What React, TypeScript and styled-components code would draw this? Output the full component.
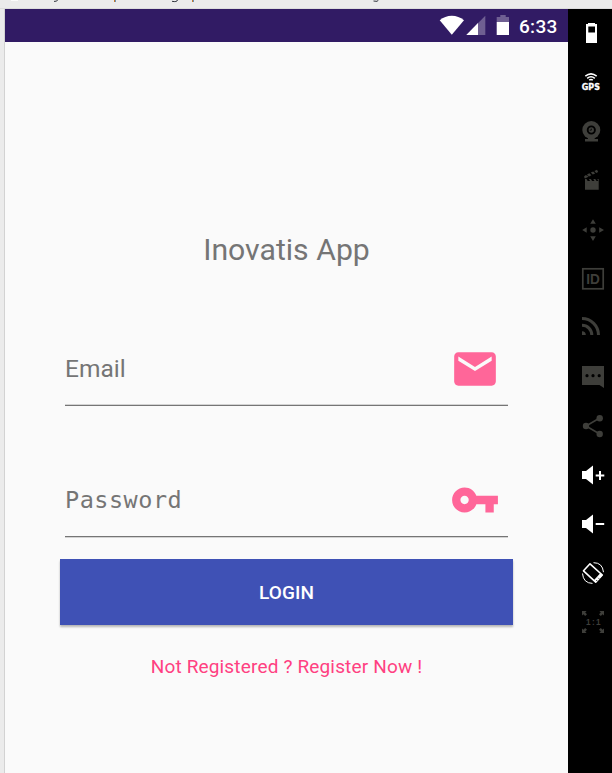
import React from "react";
import styled, { createGlobalStyle } from "styled-components";

const GlobalStyle = createGlobalStyle`
  html, body, #root { margin: 0; padding: 0; height: 100%; }
  body { overflow: hidden; background: #ebebeb; font-family: Roboto, sans-serif; }
  svg { display: block; flex: none; }
`;

const Page = styled.div`
  display: flex;
  flex-direction: column;
  width: 612px;
  height: 773px;
  overflow: hidden;
  background: #ebebeb;
`;

const EditorStrip = styled.header`
  flex: none;
  height: 8px;
  border-bottom: 1px solid #dcdcdc;
`;

const Emulator = styled.div`
  flex: 1;
  display: flex;
  box-sizing: border-box;
  padding-left: 4px;
  min-height: 0;
`;

const Screen = styled.main`
  flex: 1;
  display: flex;
  flex-direction: column;
  border-left: 1px solid #d2d2d2;
  background: #fafafa;
`;

const StatusBar = styled.div`
  flex: none;
  display: flex;
  align-items: center;
  justify-content: flex-end;
  height: 33px;
  padding-right: 10px;
  background: #311b64;
`;

const Clock = styled.span`
  width: 39px;
  margin-left: 9px;
  padding-top: 2px;
  color: #fff;
  font-size: 19px;
  font-weight: 500;
  letter-spacing: 0.3px;
  line-height: 31px;
  white-space: nowrap;
`;

const Form = styled.form`
  display: flex;
  flex-direction: column;
  padding: 0 55px;
`;

const Title = styled.h1`
  margin: 188px 0 0;
  color: #757575;
  font-size: 30.2px;
  font-weight: 400;
  line-height: 40px;
  text-align: center;
`;

const Field = styled.label<{ $top: number; $edge: "above" | "below" }>`
  display: flex;
  justify-content: space-between;
  height: 61px;
  margin: ${(p) => p.$top}px 5px 0;
  padding-right: 7.6px;
  border-bottom: 1px solid #757575;
  box-shadow: ${(p) => (p.$edge === "above" ? "inset 0 -1px 0 #d3d3d3" : "0 1px 0 #d3d3d3")};
`;

const Hint = styled.span<{ $mono?: boolean }>`
  color: #757575;
  font-family: ${(p) => (p.$mono ? '"DejaVu Sans Mono", monospace' : "Roboto, sans-serif")};
  font-size: ${(p) => (p.$mono ? 23.5 : 24.5)}px;
  letter-spacing: ${(p) => (p.$mono ? 0.5 : 0)}px;
  line-height: 50px;
`;

const LoginButton = styled.button`
  height: 66px;
  margin-top: 22px;
  padding: 0;
  border: 0;
  background: #3f51b5;
  box-shadow: 0 2px 2px rgba(0, 0, 0, 0.28);
  color: #fff;
  font: 500 19px Roboto, sans-serif;
  letter-spacing: 0.1px;
`;

const RegisterLink = styled.a`
  margin-top: 27px;
  color: #ff4081;
  font-size: 19px;
  letter-spacing: 0.165px;
  line-height: 30px;
  text-align: center;
  white-space: nowrap;
`;

const Rail = styled.aside`
  flex: none;
  display: flex;
  flex-direction: column;
  width: 44px;
  background: #000;
`;

const Tool = styled.svg.attrs({ width: 44, height: 49, viewBox: "0 0 44 49" })<{ $on?: boolean }>`
  color: ${(p) => (p.$on ? "#fff" : "#3e3e3a")};
  fill: currentColor;
`;

const speaker = "M14 21h4l7-5.5v19L18 29h-4z";

function ToolRail() {
  return (
    <Rail>
      <Tool $on>
        <path fillRule="evenodd" d="M20 14h7v1h2v19H18V15h2zM20.3 17.5v6h6.7v-6z" />
      </Tool>
      <Tool $on>
        <g fill="none" stroke="currentColor" strokeWidth="1.5">
          <path d="M17.3 18.2Q23 13.5 28.7 18.2M19.2 20.4Q23 17 26.8 20.4M21.2 22.2Q23 20.8 24.8 22.2" />
        </g>
        <text x="13.8" y="32" fontSize="8.8" fontWeight="700" fontFamily="DejaVu Sans, sans-serif" textLength="18.2" lengthAdjust="spacingAndGlyphs" stroke="currentColor" strokeWidth=".3">GPS</text>
      </Tool>
      <Tool>
        <circle cx="23.3" cy="23" r="9" />
        <path d="M20 30h6.6v2H30v2.5H17V32h3z" />
        <circle cx="23.3" cy="23" r="3.6" fill="none" stroke="#000" strokeWidth="1.9" />
        <path d="M23.3 21.6v1.6h-1.6" fill="none" stroke="#000" strokeWidth=".8" />
      </Tool>
      <Tool>
        <path d="M17 23h1.5l1.2 2h2.4l-1.2-2h2l1.2 2h2.4l-1.2-2h2l1.2 2h1.8l-1-2h1.4v10.8H17z" />
        <path d="M16 20.8l1.2-1.5 2 .2 1.3 1.2-3.6 1.8zM19 18.4l2.4-1.2 2 2-2.4 1.2zM22.8 16.6l2.4-1.2 2 2-2.4 1.2zM26.4 14.9l2.6-1.2 1.2 2.3-2 1z" />
      </Tool>
      <Tool>
        <circle cx="25" cy="25" r="2.7" />
        <path d="M25 14.2l2.8 4.6h-5.6zM25 36l2.8-4.8h-5.6zM14.2 25l4.5-2.8v5.6zM36 25l-4.8-2.8v5.6z" />
      </Tool>
      <Tool>
        <rect x="14.8" y="14.8" width="20.4" height="20" fill="none" stroke="currentColor" strokeWidth="1.7" />
        <text x="18.2" y="30.2" fontSize="14.3" fontWeight="700" fontFamily="Liberation Sans, sans-serif" textLength="13.6" lengthAdjust="spacingAndGlyphs">ID</text>
      </Tool>
      <Tool>
        <path d="M14 28.2a3.8 3.8 0 0 1 3.8 3.8H14z" />
        <path d="M14 22.2A9.8 9.8 0 0 1 23.8 32M14 15.5A16.5 16.5 0 0 1 30.5 32" fill="none" stroke="currentColor" strokeWidth="3" />
      </Tool>
      <Tool>
        <path d="M14 14h22v22l-4.5-3H14z" />
        <g fill="#000">
          <circle cx="19" cy="23.7" r="1.6" />
          <circle cx="25" cy="23.7" r="1.6" />
          <circle cx="31.2" cy="23.7" r="1.6" />
        </g>
      </Tool>
      <Tool>
        <path d="M31.7 17L18 25l13.7 8" fill="none" stroke="currentColor" strokeWidth="1.6" />
        <circle cx="31.7" cy="17.2" r="3.2" />
        <circle cx="18" cy="25" r="3.2" />
        <circle cx="31.7" cy="33" r="3.2" />
      </Tool>
      <Tool $on>
        <path d={speaker} />
        <path d="M31 21h2v3.5h3.3v2H33V30h-2v-3.5h-3.3v-2H31z" />
      </Tool>
      <Tool $on>
        <path d={speaker} />
        <path d="M27.7 24h8.5v2h-8.5z" />
      </Tool>
      <Tool $on>
        <path d="M22 15.8L34.3 27l-6.6 7.2L15.5 22.8z" fill="none" stroke="currentColor" strokeWidth="1.6" strokeLinejoin="round" />
        <path d="M25.8 32.3l6.7-7.2 2.2 2-6.8 7.3z" />
        <path d="M25.5 14.7q9-.1 10 9.5M14.5 25.5q.8 9.7 10 9.9" fill="none" stroke="currentColor" strokeWidth="1" />
        <path d="M28.2 32l1 1M30.2 29.8l1 1" stroke="#000" strokeWidth=".8" />
      </Tool>
      <Tool>
        <path d="M14 14h4.6l-1.4 1.4 1.8 1.8-1.8 1.8-1.8-1.8-1.4 1.4zM36 14h-4.6l1.4 1.4-1.8 1.8 1.8 1.8 1.8-1.8 1.4 1.4zM14 36h4.6l-1.4-1.4 1.8-1.8-1.8-1.8-1.8 1.8-1.4-1.4zM36 36h-4.6l1.4-1.4-1.8-1.8 1.8-1.8 1.8 1.8 1.4-1.4z" />
        <text x="18" y="28.3" fontSize="8.2" fontWeight="700" fontFamily="Liberation Sans, sans-serif" letterSpacing="1.4">1:1</text>
      </Tool>
    </Rail>
  );
}

export default function App() {
  return (
    <Page>
      <GlobalStyle />
      <EditorStrip>
        <svg width="612" height="8" viewBox="0 0 612 8">
          <path d="M11 0h7v.8h-7z" fill="#fff" />
          <path d="M57.5 0q0 1.5-3.5 1.4M172 1.3q5 1 5.5-1.3M373.5 1q4.5 1.2 5-1" fill="none" stroke="#30343d" strokeWidth="1" />
          <path d="M114 0h1v2h-1zM192 0h1v2h-1z" fill="#c77a2c" />
          <path d="M115 0h1v2h-1zM193 0h1v2h-1z" fill="#6c91b5" />
        </svg>
      </EditorStrip>
      <Emulator>
        <Screen>
          <StatusBar>
            <svg width="72" height="33" viewBox="438 9 72 33" fill="#fff">
              <path d="M439.7 20.3Q445 15.8 451.8 15.8T464 20.3L451.8 34.8z" />
              <path d="M485.3 15.7V35h-19z" opacity=".3" />
              <path d="M478 23.1V35h-11.7z" />
              <path d="M500.3 15h5.4v2h3.3v5h-12.3v-5h3.6z" opacity=".3" />
              <path d="M496.7 22H509v13h-12.3z" />
            </svg>
            <Clock>6:33</Clock>
          </StatusBar>
          <Form>
            <Title>Inovatis App</Title>
            <Field $top={74} $edge="above">
              <Hint>Email</Hint>
              <svg width="50" height="50" viewBox="0 0 24 24" fill="#ff6699">
                <path d="M20 4H4c-1.1 0-1.99.9-1.99 2L2 18c0 1.1.9 2 2 2h16c1.1 0 2-.9 2-2V6c0-1.1-.9-2-2-2zm0 4l-8 5-8-5V6l8 5 8-5v2z" />
              </svg>
            </Field>
            <Field $top={69} $edge="below">
              <Hint $mono>Password</Hint>
              <svg width="50" height="50" viewBox="0 0 24 24" fill="#ff6699">
                <path d="M12.65 10C11.83 7.67 9.61 6 7 6c-3.31 0-6 2.69-6 6s2.69 6 6 6c2.61 0 4.83-1.67 5.65-4H17v4h4v-4h2v-4H12.65zM7 14c-1.1 0-2-.9-2-2s.9-2 2-2 2 .9 2 2-.9 2-2 2z" />
              </svg>
            </Field>
            <LoginButton type="button">LOGIN</LoginButton>
            <RegisterLink>Not Registered ? Register Now !</RegisterLink>
          </Form>
        </Screen>
        <ToolRail />
      </Emulator>
    </Page>
  );
}
